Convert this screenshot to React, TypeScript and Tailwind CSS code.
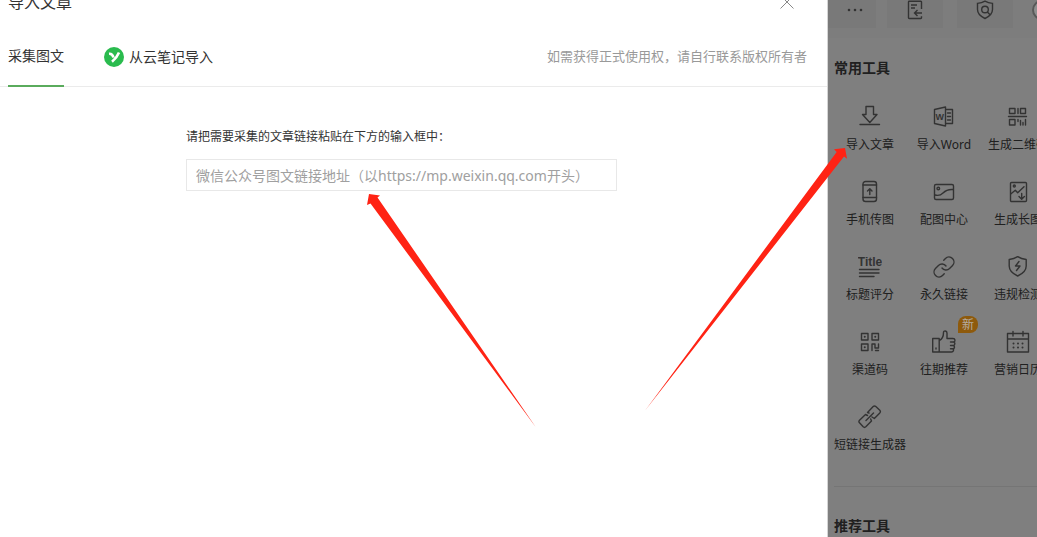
import { useState, type ReactNode } from "react";

type Tool = {
  name: string;
  icon: ReactNode;
  badge?: string;
};

function Icon({ children }: { children: ReactNode }) {
  return (
    <svg
      viewBox="0 0 24 24"
      className="h-6 w-6 fill-none stroke-[#333]"
      strokeWidth={1.4}
      strokeLinecap="round"
      strokeLinejoin="round"
      aria-hidden="true"
    >
      {children}
    </svg>
  );
}

const tools: Tool[] = [
  {
    name: "导入文章",
    icon: <path d="M8 1.5h7.5v8H19l-7.2 8-7.3-8H8zM2 19.5h19.5" />,
  },
  {
    name: "导入Word",
    icon: (
      <>
        <path d="M2.5 4.5l11-2.5v19l-11-2.5zM13.5 4.5h7v14h-7M15.5 8h3M15.5 11.5h3M15.5 15h3" />
        <text x="3.5" y="14.5" className="fill-[#333] stroke-none font-['Liberation_Sans',sans-serif] text-[9px] font-bold">
          W
        </text>
      </>
    ),
  },
  {
    name: "生成二维码",
    icon: (
      <path d="M3.5 3.5H9v5H3.5zM14.5 3.5h5v5h-5zM12 3.5v5M2.5 11.5h18M3.5 14.5H9V20H3.5zM12 14.5v2M14.5 15.5v4.5M17 17.5V20M19.5 14.5V20" />
    ),
  },
  {
    name: "手机传图",
    icon: (
      <>
        <rect x="5" y="1.5" width="13.5" height="20" rx="2.5" />
        <path d="M5 5h13.5M5 17.5h13.5M11.8 14.5V9M9.5 11l2.3-2.3L14 11" />
      </>
    ),
  },
  {
    name: "配图中心",
    icon: (
      <>
        <rect x="2.5" y="4.5" width="19" height="15" rx="1.5" />
        <circle cx="6.3" cy="8.5" r="1.3" />
        <path d="M3 15c3.500 1 5.500.5 8-2s4.500-4 10-3.500" />
      </>
    ),
  },
  {
    name: "生成长图",
    icon: (
      <>
        <rect x="4.5" y="2.5" width="16" height="19" rx="1" />
        <circle cx="8.300" cy="6" r="1" />
        <path d="M4.700 14l4.600-3.700 2.400 2.400L18 6.700M15.700 13.500V19M13 16.500l2.700 2.700 2.700-2.700" />
      </>
    ),
  },
  {
    name: "标题评分",
    icon: (
      <>
        <text
          x="12"
          y="11"
          textAnchor="middle"
          className="fill-[#333] stroke-none font-['Liberation_Sans',sans-serif] text-[12px] font-bold"
        >
          Title
        </text>
        <path d="M1.500 14.500H21M1.500 18H21M1.500 21.500H16" />
      </>
    ),
  },
  {
    name: "永久链接",
    icon: (
      <>
        <path d="M10 13a5 5 0 0 0 7.540.540l3-3a5 5 0 0 0-7.070-7.070l-1.720 1.710" />
        <path d="M14 11a5 5 0 0 0-7.540-.540l-3 3a5 5 0 0 0 7.070 7.070l1.710-1.710" />
      </>
    ),
  },
  {
    name: "违规检测",
    icon: (
      <path d="M11.700 1.700c2.600 1.700 5.200 2.500 8.500 2.800V11c0 4.500-3.500 7.700-8.500 10-5-2.300-8.500-5.500-8.500-10V4.500c3.300-.3 5.900-1.100 8.500-2.800zM13 6.500l-3.500 4.500h4.500l-3.500 4.500" />
    ),
  },
  {
    name: "渠道码",
    icon: (
      <>
        <path d="M3.500 3.500H10v6.500H3.500zM14 3.500h6.500v6.500H14zM3.500 14H10v6.500H3.500zM14 20.500V14h3v4h3.500v-4M17.500 20.500h3" />
        <path strokeWidth={2} d="M6.750 6.750h.01M17.250 6.750h.01M6.750 17.250h.01" />
      </>
    ),
  },
  {
    name: "往期推荐",
    badge: "新",
    icon: (
      <>
        <path d="M.7 8.500h6.500V22H.7zM7.200 10.500c3-1.200 4.300-4 4.300-8 0-2.200 3.500-2 3.500.5v5.500h6c2.500 0 2.500 3 .7 3.500 1.600.7 1.600 3-.2 3.500 1.500.7 1.300 3-.5 3.300 1.200 1 .5 3.200-1.500 3.200H7.200" />
        <path d="M4 18v1M18.500 12H21M18.500 15.500H21M18.500 18.800h2" />
      </>
    ),
  },
  {
    name: "营销日历",
    icon: (
      <>
        <path d="M1.500 3.500h21V22h-21zM1.500 9h21M7 1.500V6M17 1.500V6" />
        <path strokeWidth={2} d="M7.500 13.500h.01M12 13.500h.01M16.500 13.500h.01M7.500 17.500h.01M12 17.500h.01M16.500 17.500h.01" />
      </>
    ),
  },
  {
    name: "短链接生成器",
    icon: (
      <path d="M11 8L9.500 7.500l5.700-6q1.300-1.200 2.600 0l4 3.800q1.200 1.300 0 2.600l-5.500 5.600-2.300-1.500M9.500 10.500L7.500 9.500l-6 5.700q-1.200 1.300 0 2.600l3.700 4q1.300 1.200 2.600 0l5.700-5.800-.8-2M8 15.500l7.500-7.500" />
    ),
  },
];

function ToolButton({ tool }: { tool: Tool }) {
  return (
    <button type="button" className="relative flex flex-col items-center gap-[7px]">
      <Icon>{tool.icon}</Icon>
      <span className="text-xs leading-[18px] whitespace-nowrap">{tool.name}</span>
      {tool.badge && (
        <span className="absolute -top-3.5 left-[51px] rounded-lg rounded-bl-none bg-[#8e5a0c] px-1 text-xs leading-[17px] text-[#b5aca0]">
          {tool.badge}
        </span>
      )}
    </button>
  );
}

function ImportDialog() {
  const [url, setUrl] = useState("");

  return (
    <main className="min-w-0 flex-1 border-r border-[#d5d5d5] bg-white">
      <header className="-mt-2.5 flex h-6 items-center justify-between pr-[33px] pl-2">
        <h1 className="text-base leading-6">导入文章</h1>
        <button type="button" aria-label="关闭">
          <svg viewBox="0 0 14 14" className="h-3.5 w-3.5 fill-none stroke-[#888]" aria-hidden="true">
            <path d="M.5.5l13 13M13.500.5l-13 13" />
          </svg>
        </button>
      </header>

      <nav className="mt-[13px] flex h-[60px] items-stretch gap-10 border-b border-[#ebebeb] pr-5 pl-2 text-sm">
        <button type="button" className="-mb-px border-b-2 border-[#5aab5c]">
          采集图文
        </button>
        <button type="button" className="flex items-center gap-[5px]">
          <svg viewBox="0 0 20 20" className="h-5 w-5" aria-hidden="true">
            <circle cx="10" cy="10" r="10" className="fill-[#2abb4e]" />
            <path d="M5 6.800q3.500-.3 4.500 3.700M15 5.500q-2 5-7 9.300" className="fill-none stroke-white" strokeWidth={2.600} />
          </svg>
          从云笔记导入
        </button>
        <p className="ml-auto self-center text-[13px] text-[#999]">如需获得正式使用权，请自行联系版权所有者</p>
      </nav>

      <div className="mt-[41px] ml-[186px] flex max-w-[431px] flex-col gap-[13px]">
        <label htmlFor="article-url" className="text-xs leading-[18px]">
          请把需要采集的文章链接粘贴在下方的输入框中：
        </label>
        <input
          id="article-url"
          type="text"
          value={url}
          onChange={(e) => setUrl(e.target.value)}
          placeholder="微信公众号图文链接地址（以https://mp.weixin.qq.com开头）"
          className="h-8 w-full border border-[#e8e8e8] px-[9px] text-sm outline-none placeholder:text-[#a0a0a0]"
        />
      </div>
    </main>
  );
}

function ToolPanel() {
  return (
    <aside className="w-[209px] shrink-0 overflow-hidden bg-[#7f7f7f] text-[#202020]">
      <div className="flex h-[38px] items-start bg-[#7d7d7d]">
        <button type="button" aria-label="更多" className="flex h-7 w-12 shrink-0 items-center justify-center bg-[#797979] pb-2 pl-1.5">
          <svg viewBox="0 0 20 20" className="h-5 w-5 fill-[#333]" aria-hidden="true">
            <circle cx="4" cy="10" r="1.300" />
            <circle cx="10" cy="10" r="1.300" />
            <circle cx="16" cy="10" r="1.300" />
          </svg>
        </button>
        <button type="button" aria-label="导入文档" className="ml-[11px] flex h-7 w-14 shrink-0 items-center justify-center bg-[#797979] pb-2">
          <svg viewBox="0 0 20 20" className="h-5 w-5 fill-none stroke-[#333]" strokeWidth={1.400} aria-hidden="true">
            <path d="M16.500 9V2q0-.7-.7-.7H4.200q-.7 0-.7.7v15.800q0 .7.700.7h11.600q.7 0 .7-.7v-1.500M6 5h6M6 8h4M17 13H9.500M12.500 10l-3 3 3 3" />
          </svg>
        </button>
        <button type="button" aria-label="内容检测" className="ml-3.5 flex h-7 w-14 shrink-0 items-center justify-center bg-[#797979] pb-2">
          <svg viewBox="0 0 20 20" className="h-5 w-5 fill-none stroke-[#333]" strokeWidth={1.400} aria-hidden="true">
            <path d="M10 1.200c2.400 1.400 4.800 2 7.500 2.200v6.100c0 4-2.800 6.800-7.500 9-4.700-2.200-7.500-5-7.500-9V3.400C5.200 3.200 7.600 2.600 10 1.200zM12.300 12l2.500 2.500" />
            <circle cx="10" cy="9.500" r="3.300" />
          </svg>
        </button>
        <span className="ml-[19px] h-5 w-5 shrink-0 rounded-full border-2 border-[#595959] bg-[#909090]" />
      </div>

      <section className="pt-5 pl-1.5">
        <h2 className="text-sm leading-5 font-bold">常用工具</h2>
        <div className="mt-[27px] -ml-px grid grid-cols-[repeat(3,74px)] gap-y-[26px]">
          {tools.map((tool) => (
            <ToolButton key={tool.name} tool={tool} />
          ))}
        </div>
      </section>

      <section className="mt-8 ml-1.5 border-t border-[#757575] pt-[29px]">
        <h2 className="text-sm leading-5 font-bold">推荐工具</h2>
      </section>
    </aside>
  );
}

export default function App() {
  return (
    <div className="relative flex h-screen overflow-hidden font-['Noto_Sans','Noto_Sans_CJK_SC',sans-serif] text-[#333]">
      <ImportDialog />
      <ToolPanel />
      {/* guide arrows over both panes */}
      <svg
        viewBox="0 0 1037 537"
        className="pointer-events-none absolute top-0 right-0 h-[537px] w-[1037px] fill-[#ff2314]"
        aria-hidden="true"
      >
        <path d="M369 194l11 1.500-2.500 2L536 427.500 370.500 203.500 367 205z" />
        <path d="M845 148l-11 1.300 2.700 2.700L645.500 410 844 156.500l3 2.200z" />
      </svg>
    </div>
  );
}
